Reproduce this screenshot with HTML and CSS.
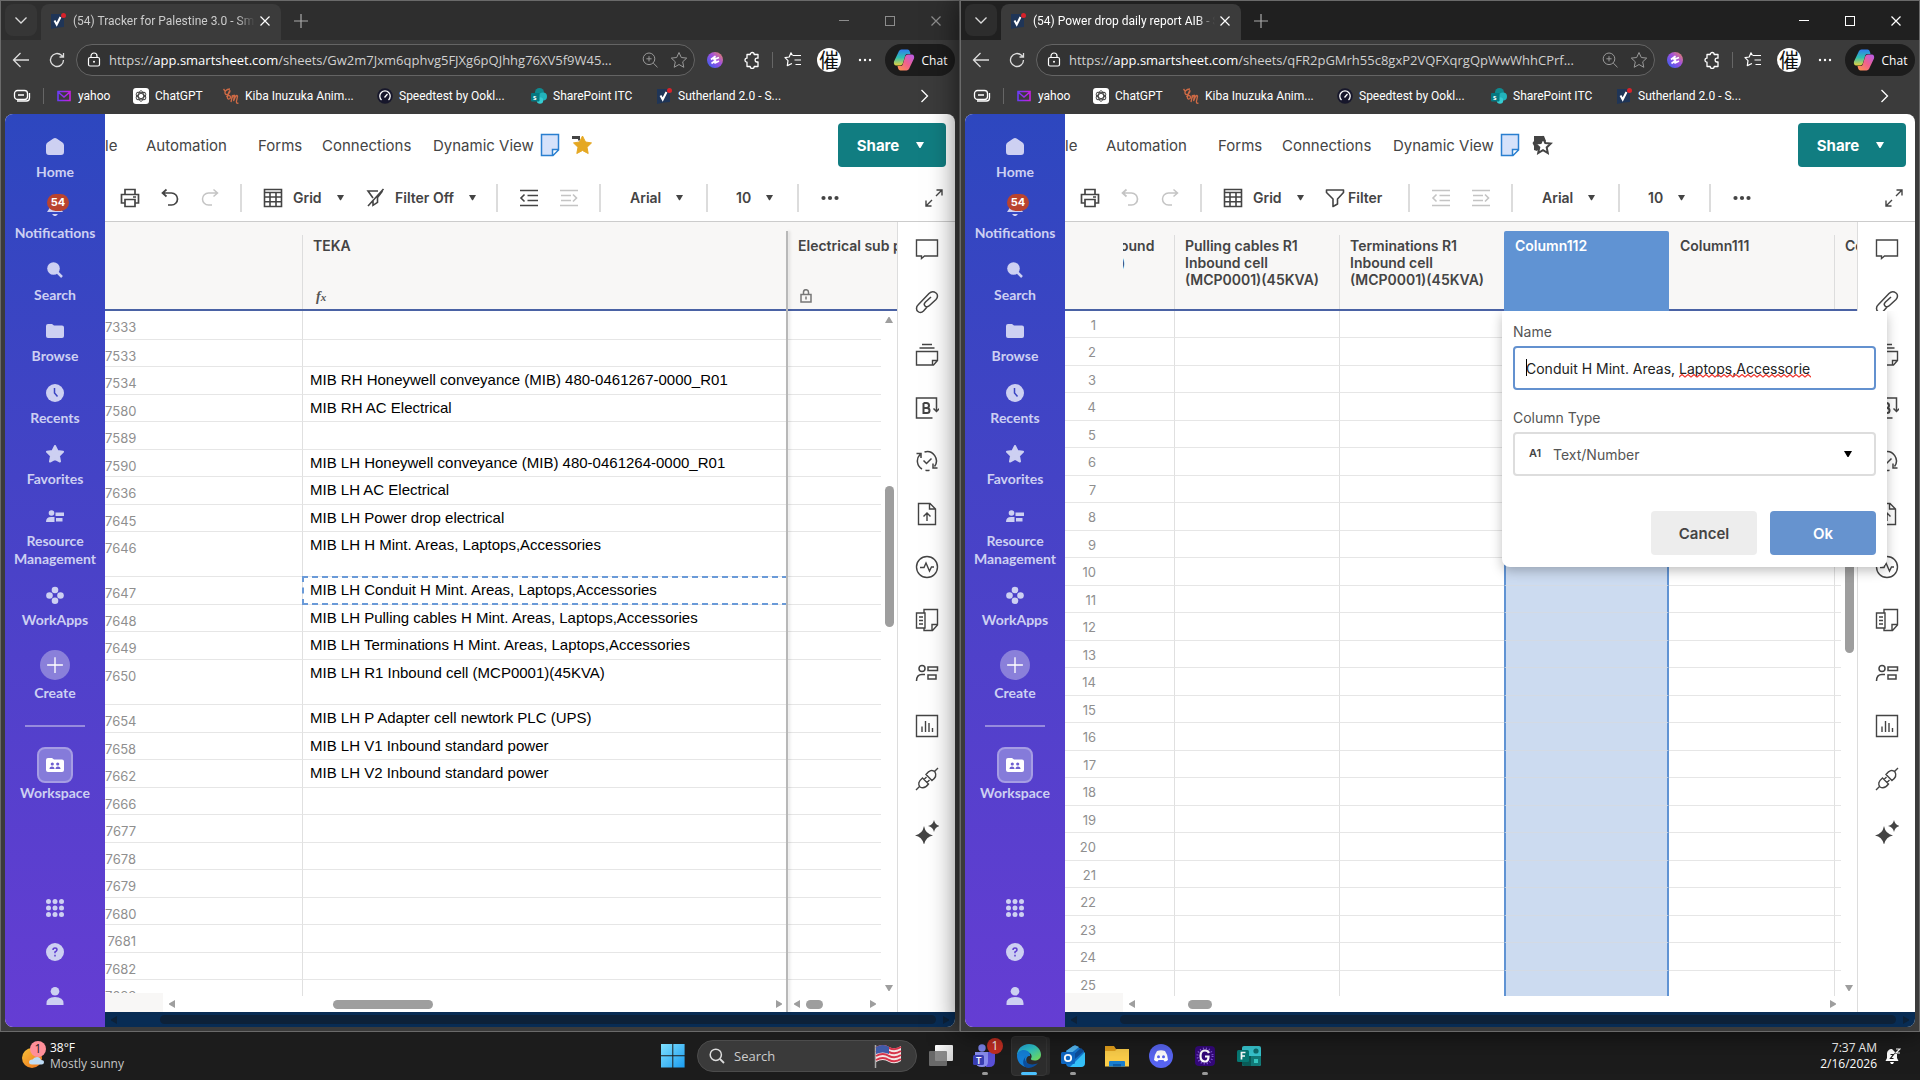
FILE: index.html
```html
<!DOCTYPE html>
<html lang="en">
<head>
<meta charset="utf-8">
<title>Desktop</title>
<link rel="stylesheet" href="styles.css">
</head>
<body>
<svg class="sprite" aria-hidden="true">
  <defs>
    <linearGradient id="g-cop1" x1="0" y1="0" x2="0" y2="1"><stop offset="0" stop-color="#2f7df0"/><stop offset=".5" stop-color="#2fc0b0"/><stop offset="1" stop-color="#e8d23c"/></linearGradient>
    <linearGradient id="g-cop2" x1="1" y1="0" x2="0" y2="1"><stop offset="0" stop-color="#b45cf0"/><stop offset=".5" stop-color="#f0608c"/><stop offset="1" stop-color="#ff9a4a"/></linearGradient>
    <linearGradient id="g-ext" x1="1" y1="0" x2="0" y2="1"><stop offset="0" stop-color="#f08a5a"/><stop offset=".45" stop-color="#a050e0"/><stop offset="1" stop-color="#2a60f0"/></linearGradient>
    <linearGradient id="g-edge" x1="0" y1="0" x2="1" y2="1"><stop offset="0" stop-color="#1f9fe0"/><stop offset=".45" stop-color="#2fc6c8"/><stop offset="1" stop-color="#7be04a"/></linearGradient>
    <linearGradient id="g-win" x1="0" y1="0" x2="1" y2="1"><stop offset="0" stop-color="#7fe0ff"/><stop offset="1" stop-color="#1a9cf0"/></linearGradient>
    <linearGradient id="g-yah" x1="0" y1="0" x2="1" y2="0"><stop offset="0" stop-color="#6a3cf5"/><stop offset="1" stop-color="#c81ee0"/></linearGradient>
    <linearGradient id="g-sun" x1="0" y1="0" x2="1" y2="1"><stop offset="0" stop-color="#f8c33a"/><stop offset="1" stop-color="#ee6f1a"/></linearGradient>
    <linearGradient id="g-task" x1="0" y1="0" x2="1" y2="1"><stop offset="0" stop-color="#fff"/><stop offset="1" stop-color="#d0d0d0"/></linearGradient>
  </defs>
  <!-- browser chrome -->
  <symbol id="chev-down" viewBox="0 0 14 14"><path d="M1.500 4.500 7 10l5.500-5.500" fill="none" stroke="currentColor" stroke-width="1.300"/></symbol>
  <symbol id="sheet-logo" viewBox="0 0 16 16"><path d="M1 1h13v13l-6 .5L1 16z" fill="#1f3557"/><path d="m4.500 7.500 2.200 4L10.500 4" fill="none" stroke="#fff" stroke-width="2"/><circle cx="13.500" cy="2.500" r="2.500" fill="#d8222a"/></symbol>
  <symbol id="close" viewBox="0 0 12 12"><path d="m1.500 1.500 9 9m0-9-9 9" fill="none" stroke="currentColor" stroke-width="1.200"/></symbol>
  <symbol id="plus" viewBox="0 0 16 16"><path d="M8 1v14M1 8h14" fill="none" stroke="currentColor" stroke-width="1.200"/></symbol>
  <symbol id="win-min" viewBox="0 0 12 12"><path d="M1 5.500h10" stroke="currentColor"/></symbol>
  <symbol id="win-max" viewBox="0 0 12 12"><rect x="1.500" y="1.500" width="9" height="9" fill="none" stroke="currentColor"/></symbol>
  <symbol id="back" viewBox="0 0 18 18"><path d="M17 9H1.500M8.500 2l-7 7 7 7" fill="none" stroke="currentColor" stroke-width="1.300"/></symbol>
  <symbol id="reload" viewBox="0 0 18 18"><path d="M15.500 9a6.500 6.500 0 1 1-2-4.700l1.500 1.500M15.500 2v4h-4" fill="none" stroke="currentColor" stroke-width="1.300"/></symbol>
  <symbol id="lock" viewBox="0 0 16 16"><rect x="2.500" y="5.500" width="11" height="8.500" rx="1.500" fill="none" stroke="currentColor" stroke-width="1.200"/><path d="M5 5.500V4a3 3 0 0 1 6 0v1.500" fill="none" stroke="currentColor" stroke-width="1.200"/><circle cx="8" cy="9.700" r="1" fill="currentColor"/></symbol>
  <symbol id="zoomin" viewBox="0 0 16 16"><path d="M7 1a5.800 5.800 0 1 0 0 11.600A5.800 5.800 0 0 0 7 1zm4.200 10 4.300 4.300M7 4.200v5.200M4.400 6.800h5.200" fill="none" stroke="currentColor"/></symbol>
  <symbol id="star-o" viewBox="0 0 18 18"><path d="m9 1.500 2.300 5 5.400.6-4 3.700 1.100 5.500L9 13.500l-4.800 2.800 1.100-5.500-4-3.700 5.400-.6z" fill="none" stroke="currentColor" stroke-linejoin="round"/></symbol>
  <symbol id="ext" viewBox="0 0 16 16"><circle cx="8" cy="8" r="8" fill="url(#g-ext)"/><path d="M4 7.500 8 4.500 7 7.500l5-2M4.500 11.500l4-3-.5 2.500 4-2" stroke="#fff" stroke-width="1.700" fill="none" stroke-linejoin="round"/></symbol>
  <symbol id="puzzle" viewBox="0 0 18 18"><path d="M4 3.500h3.200a2 2 0 0 1 4 0H15v3.700h-1a1.900 1.900 0 0 0 0 3.800h1v4.500h-3.800a2 2 0 0 1-4 0H4v-4.300a2 2 0 0 1 0-4z" fill="none" stroke="currentColor" stroke-width="1.300" stroke-linejoin="round"/></symbol>
  <symbol id="favs" viewBox="0 0 18 18"><path d="M8.500 4.500 7 1.800 5.200 6 1 6.600l3 3-.7 5L8 12.500M9 4.500h8M10.500 9H17M11.500 13.500H17" fill="none" stroke="currentColor" stroke-width="1.200" stroke-linejoin="round"/></symbol>
  <symbol id="dots" viewBox="0 0 18 6"><circle cx="4" cy="3" r="1.200" fill="currentColor"/><circle cx="9" cy="3" r="1.200" fill="currentColor"/><circle cx="14" cy="3" r="1.200" fill="currentColor"/></symbol>
  <symbol id="copilot" viewBox="0 0 22 22"><path d="M6 2c1-1.300 2-1.500 3.500-1.500h5c1.500 0 2 1 2.500 2.500l.5 2h-3c-1.500 0-2 .8-2.500 2.200L10 14c-.5 1.500-1.500 2.500-3 2.500H3.500C1 16.500.5 14.500 1 12.500z" fill="url(#g-cop1)"/><path d="M16 20c-1 1.300-2 1.500-3.500 1.500h-5C6 21.500 5.500 20.500 5 19l-.5-2h3c1.500 0 2-.8 2.500-2.200L12 8c.5-1.500 1.500-2.500 3-2.500h3.500c2.500 0 3 2 2.500 4z" fill="url(#g-cop2)"/></symbol>
  <symbol id="workspaces" viewBox="0 0 18 14"><rect x="1.500" y="1.500" width="13" height="9" rx="3" fill="none" stroke="currentColor" stroke-width="1.300"/><path d="M16.500 4v5a3 3 0 0 1-3 3H4M5 6h6" fill="none" stroke="currentColor" stroke-width="1.300"/></symbol>
  <symbol id="yahoo" viewBox="0 0 16 16"><path d="M2 3.500h12v9H2zM2 4l6 5 6-5" fill="none" stroke="url(#g-yah)" stroke-width="1.600"/></symbol>
  <symbol id="gpt" viewBox="0 0 16 16"><rect width="16" height="16" rx="3" fill="#fff"/><g fill="none" stroke="#444" stroke-width=".9"><ellipse cx="8" cy="8" rx="2.600" ry="5.300"/><ellipse cx="8" cy="8" rx="2.600" ry="5.300" transform="rotate(60 8 8)"/><ellipse cx="8" cy="8" rx="2.600" ry="5.300" transform="rotate(120 8 8)"/></g></symbol>
  <symbol id="kiba" viewBox="0 0 16 16"><path d="M.5 1 2 3M7 1C3 1 1 4 2.500 6S7 5 7 3 4 8 4.500 10s3 1 3-1-3-2-4 0M8 14l1.500-7M9 10q2-4 2.500-2.500L10.500 13l2-4.500q1.500-2 2 0L13.500 13q-.5 3 2 2" fill="none" stroke="#cf6a45" stroke-width="1.300"/></symbol>
  <symbol id="speed" viewBox="0 0 16 16"><circle cx="8" cy="8" r="7.800" fill="#17172b"/><path d="M4.500 12a5.200 5.200 0 1 1 7 0M7.500 9.500 10.500 6" fill="none" stroke="#fff" stroke-width="1.300"/></symbol>
  <symbol id="sharept" viewBox="0 0 16 16"><circle cx="8.500" cy="4.500" r="4.500" fill="#0f8a90"/><circle cx="12" cy="8.500" r="4" fill="#22b4bc"/><circle cx="9" cy="12.500" r="3.200" fill="#35ccd2"/><rect y="5" width="8.500" height="8.500" rx="1" fill="#067880"/><text x="2" y="12" font-size="8" font-weight="700" font-family="Lato,sans-serif" fill="#fff">s</text></symbol>
  <symbol id="chev-right" viewBox="0 0 10 14"><path d="m1.500 1 6 6-6 6" fill="none" stroke="currentColor" stroke-width="1.300"/></symbol>
  <!-- sidebar -->
  <symbol id="home" viewBox="0 0 18 18"><path d="M9 0q1 0 2 .8l5.500 3.700Q18 5.500 18 7.500V14q0 3-3 3H3q-3 0-3-3V7.500q0-2 1.500-3L7 .8Q8 0 9 0z" fill="currentColor"/></symbol>
  <symbol id="bell" viewBox="0 0 18 18"><path d="M9 0c-4 0-6 3-6 6v4L1 13h16l-2-3V6c0-3-2-6-6-6zM6 15h6l-2 2H8z" fill="currentColor"/></symbol>
  <symbol id="search-f" viewBox="0 0 18 18"><circle cx="7.500" cy="7.500" r="6.300" fill="currentColor"/><path d="m11 11 5 5" stroke="currentColor" stroke-width="2.500"/></symbol>
  <symbol id="folder" viewBox="0 0 18 18"><path d="M0 4q0-2 2-2h4l2 1.500h8q2 0 2 2V14q0 2-2 2H2q-2 0-2-2z" fill="currentColor"/></symbol>
  <symbol id="clock" viewBox="0 0 18 18"><circle cx="9" cy="9" r="9" fill="currentColor"/><path d="M8.500 4v5l3 3.500" stroke="#3a44c3" stroke-width="1.500" fill="none"/></symbol>
  <symbol id="star-f" viewBox="0 0 18 18"><path d="m9 1 2.500 5 5.500.8-4 4 1 5.700-5-2.700-5 2.700 1-5.700-4-4L6.500 6z" fill="currentColor" stroke="currentColor" stroke-width="2" stroke-linejoin="round"/></symbol>
  <symbol id="resource" viewBox="0 0 18 18"><circle cx="5.500" cy="6" r="2.800" fill="currentColor"/><path d="M0 15q0-5 5-5h3.500v5zM9.500 5.500H18V9H9.500zM10 11h6.500v3.500H10z" fill="currentColor"/></symbol>
  <symbol id="workapps" viewBox="0 0 18 18"><circle cx="9" cy="4" r="3.300" fill="currentColor"/><circle cx="3.500" cy="9.500" r="3.300" fill="currentColor"/><circle cx="14.500" cy="9.500" r="3.300" fill="currentColor"/><circle cx="9" cy="14.700" r="3.300" fill="currentColor"/></symbol>
  <symbol id="team-folder" viewBox="0 0 18 18"><path d="M0 4q0-2 2-2h4l2 1.500h8q2 0 2 2V14q0 2-2 2H2q-2 0-2-2z" fill="#fff"/><g fill="#6d5fd0"><circle cx="6.300" cy="8" r="1.600"/><circle cx="11.700" cy="8" r="1.600"/><path d="M3.500 13q0-2.500 2.500-2.500T8.500 13zM9.500 13q0-2.500 2.500-2.500t2.500 2.500z"/></g></symbol>
  <symbol id="apps" viewBox="0 0 18 18"><g fill="currentColor"><circle cx="2.500" cy="2.500" r="2.500"/><circle cx="9" cy="2.500" r="2.500"/><circle cx="15.500" cy="2.500" r="2.500"/><circle cx="2.500" cy="9" r="2.500"/><circle cx="9" cy="9" r="2.500"/><circle cx="15.500" cy="9" r="2.500"/><circle cx="2.500" cy="15.500" r="2.500"/><circle cx="9" cy="15.500" r="2.500"/><circle cx="15.500" cy="15.500" r="2.500"/></g></symbol>
  <symbol id="help" viewBox="0 0 18 18"><circle cx="9" cy="9" r="9" fill="currentColor"/><path d="M7 7q0-2 2-2t2 1.700Q11 8 9 9v1.300M9 11.800v1.600" stroke="#5e3dd0" stroke-width="1.500" fill="none"/></symbol>
  <symbol id="person" viewBox="0 0 18 18"><circle cx="9" cy="4.300" r="4.300" fill="currentColor"/><path d="M.5 18v-1.500Q.5 10 9 10t8.500 6.500V18z" fill="currentColor"/></symbol>
  <!-- sheet menu and toolbar -->
  <symbol id="note" viewBox="0 0 20 24"><path d="M1.500 1.500h17V17L13 22.500H1.500zM18.500 16.500h-6v6" fill="#d6e2fa" stroke="#2a7fd0" stroke-width="1.500"/></symbol>
  <symbol id="fav-on" viewBox="0 0 22 22"><path d="M1 2h8v4.500H7V5H1z" fill="#444"/><path d="m11.500 2 3 6 6 .9-4.500 4.400 1.200 6.200-5.700-3-5.700 3L7 13.300 2.500 8.900l6-.9z" fill="#e5a823" stroke="#e5a823" stroke-width="1"/></symbol>
  <symbol id="fav-off" viewBox="0 0 22 22"><path d="M3 2h10l2 5-9 10-3-1V12L1.500 9 3 7z" fill="#444"/><path d="m12 4 2.300 5 5.400.6-4 3.800 1.100 5.600-4.800-2.800L7.200 19l1.100-5.600-4-3.800 5.400-.6z" fill="#fff" stroke="#444" stroke-width="2"/></symbol>
  <symbol id="caret" viewBox="0 0 8 8"><path d="M0 1h8L4.500 7h-1z" fill="currentColor"/></symbol>
  <symbol id="print" viewBox="0 0 20 20"><path d="M5 6V1.500h10V6M5 15H1.500V6.500h17V15H15M5 11.500h10v7H5z" fill="none" stroke="currentColor" stroke-width="1.700"/><path d="M13 9h3" stroke="currentColor" stroke-width="1.500"/></symbol>
  <symbol id="undo" viewBox="0 0 20 20"><path d="M6.500 1.500 2.500 5l4 3.500M3 5h8.500a6 6 0 0 1 0 12H8" fill="none" stroke="currentColor" stroke-width="1.700"/></symbol>
  <symbol id="redo" viewBox="0 0 20 20"><path d="m13.500 1.500 4 3.500-4 3.500M17 5H8.500a6 6 0 0 0 0 12H12" fill="none" stroke="currentColor" stroke-width="1.500"/></symbol>
  <symbol id="gridv" viewBox="0 0 20 20"><path d="M1.500 1.500h17v17h-17zM1.500 4.500h17M1.500 9h17M1.500 13.800h17M7 4.500v14M13 4.500v14" fill="none" stroke="currentColor" stroke-width="1.600"/></symbol>
  <symbol id="filter-x" viewBox="0 0 20 20"><path d="M13 3H3l5 7M8 12.500v4.800l4.500-3V9.500L17.500 3M18.500 1 3 18" fill="none" stroke="currentColor" stroke-width="1.600"/></symbol>
  <symbol id="filter" viewBox="0 0 20 20"><path d="M1.500 2h17v2.500L12.500 11v5L8 18.500V11L1.500 4.500z" fill="none" stroke="currentColor" stroke-width="1.600" stroke-linejoin="round"/></symbol>
  <symbol id="outdent" viewBox="0 0 20 20"><path d="M1 2.500h18M1 17.500h18M8.500 7.500H19M8.500 12.500H19M5.500 6.500 2 10l3.500 3.500" fill="none" stroke="currentColor" stroke-width="1.600"/></symbol>
  <symbol id="indent" viewBox="0 0 20 20"><path d="M1 2.500h18M1 17.500h18M2 7.500h10M2 12.500h10M14 6.500l3.500 3.500-3.500 3.500" fill="none" stroke="currentColor" stroke-width="1.600"/></symbol>
  <symbol id="more" viewBox="0 0 20 6"><circle cx="3.500" cy="3" r="2.100" fill="currentColor"/><circle cx="10" cy="3" r="2.100" fill="currentColor"/><circle cx="16.500" cy="3" r="2.100" fill="currentColor"/></symbol>
  <symbol id="expand" viewBox="0 0 18 18"><path d="M11.500 1H17v5.500M17 1l-6 6M1 11.500V17h5.500M1 17l6-6" fill="none" stroke="currentColor" stroke-width="1.400"/></symbol>
  <symbol id="padlock" viewBox="0 0 12 14"><path d="M1 5.500h10V13H1zM3.500 5.500V3.200a2.500 2.500 0 0 1 5 0v2.300M6 7.500v3" fill="none" stroke="#777" stroke-width="1.500"/></symbol>
  <!-- right rail -->
  <symbol id="r-comment" viewBox="0 0 24 24"><path d="M1.500 3h21v16H9.500l-3 2.500V19h-5z" fill="none" stroke="currentColor" stroke-width="1.400"/></symbol>
  <symbol id="r-link" viewBox="0 0 24 24"><path d="M12.500 16.500 8.500 21c-2 2-4.500 1.500-5.500.5-2-1.500-2-4.500 0-6.500L14 3.500c2-2 5-2 7-.5s2 4.500 0 6.500l-6.500 6c-1.500 1.500-3.500 1.500-4.500.5s-1-2.500.5-4L16 7" fill="none" stroke="currentColor" stroke-width="1.500"/></symbol>
  <symbol id="r-cards" viewBox="0 0 24 24"><path d="M7 1.500h10M4.500 5h15M1.500 8.500h21v9l-4 4.500h-17zM17.500 22v-4.500h5" fill="none" stroke="currentColor" stroke-width="1.400"/></symbol>
  <symbol id="r-brand" viewBox="0 0 24 24"><path d="M17.500 22h-16V2h20v12.500M18.500 12.500l3 3 3-3" fill="none" stroke="currentColor" stroke-width="1.500"/><path d="M8.500 7v10h3.500a2.500 2.500 0 0 0 0-5h-3.500M8.500 7H11.500a2.400 2.400 0 0 1 0 5" fill="none" stroke="currentColor" stroke-width="2"/></symbol>
  <symbol id="r-update" viewBox="0 0 24 24"><path d="M7 20A9.300 9.300 0 0 1 5 5.500M9.500 3A9.300 9.300 0 0 1 19.500 17.500M14.500 21.300a9 9 0 0 1-4 0M1.500 4.500H6V9M22.500 19H18v-4.500M8.500 11.500l3 3 5-5" fill="none" stroke="currentColor" stroke-width="1.500"/></symbol>
  <symbol id="r-file" viewBox="0 0 24 24"><path d="M3.500 1.500H15L20.500 7v15.500h-17zM14.500 1.500V7h6M12 19v-7M8.500 14.500 12 11l3.500 3.500" fill="none" stroke="currentColor" stroke-width="1.400"/></symbol>
  <symbol id="r-activity" viewBox="0 0 24 24"><circle cx="12" cy="12" r="10.500" fill="none" stroke="currentColor" stroke-width="1.400"/><path d="M5 12.500h4l2-4.500 3.500 8 2-4H19" fill="none" stroke="currentColor" stroke-width="1.400"/></symbol>
  <symbol id="r-summary" viewBox="0 0 24 24"><path d="M9 5V1.500h13.500V17l-5 5.500H9V20M22 16.500h-5v6M1.500 5H10v15H1.500zM4 9h4M4 12.500h4M4 16h4" fill="none" stroke="currentColor" stroke-width="1.400"/></symbol>
  <symbol id="r-people" viewBox="0 0 24 24"><circle cx="7" cy="7.500" r="3" fill="none" stroke="currentColor" stroke-width="1.500"/><path d="M1.500 20q0-6.500 5.500-6.500h3M13 6h9.500v3.500H13zM13 14h8v4h-8z" fill="none" stroke="currentColor" stroke-width="1.500"/></symbol>
  <symbol id="r-chart" viewBox="0 0 24 24"><path d="M1.500 1.500h21v21h-21zM7 18v-5.500M10.500 18V7M14 18V9M17.500 18v-4" fill="none" stroke="currentColor" stroke-width="1.400"/></symbol>
  <symbol id="r-plug" viewBox="0 0 24 24"><path d="M1 23l3.500-3.500M7.500 11l6 6q-4 5.500-8.500 3-3.500-4 2.500-9zM23 1l-3.500 3.500M11 7.500l6 6q5.500-4 3-8.500-4-4-9 2.500zM9 12.500l2.500-2.500M12 15.500l2.500-2.500" fill="none" stroke="currentColor" stroke-width="1.400"/></symbol>
  <symbol id="r-ai" viewBox="0 0 24 24"><path d="M9 6q1.500 8 9 9.500Q10.500 17 9 25 7.500 17 0 15.500 7.500 14 9 6zM19 0q1 5 6 6-5 1-6 6-1-5-6-6 5-1 6-6z" fill="currentColor"/></symbol>
  <!-- taskbar -->
  <symbol id="weather" viewBox="0 0 26 28"><circle cx="11" cy="16" r="10" fill="url(#g-sun)"/><path d="M11 22.500q-3 0-3-2.500t3.500-2.500Q13 15 16 15t4 3q3 0 3 2.200t-2.500 2.300z" fill="#bfdcf5"/></symbol>
  <symbol id="start" viewBox="0 0 24 24"><path d="M0 0h11.300v11.300H0zM12.300 0h11.300v11.300H12.300zM0 12.300h11.300v11.300H0zM12.300 12.300h11.300v11.300H12.300z" fill="url(#g-win)"/></symbol>
  <symbol id="search-o" viewBox="0 0 16 16"><circle cx="6.800" cy="6.800" r="5.600" fill="none" stroke="currentColor" stroke-width="1.500"/><path d="m11 11 4 4" stroke="currentColor" stroke-width="1.800"/></symbol>
  <symbol id="flag" viewBox="0 0 28 24"><path d="M1.500 1v23" stroke="#aaa" stroke-width="1.500"/><path d="M2 3q7-4 13 0 6 3 12-1v15q-6 4-12 1-6-4-13 0z" fill="#f3e6e6"/><path d="M2 4q7-4 13 0 6 3 12-1M2 8q7-4 13 0 6 3 12-1M2 12q7-4 13 0 6 3 12-1M2 16q7-4 13 0 6 3 12-1" fill="none" stroke="#d6344a" stroke-width="2"/><path d="M2 3q7-4 13 0v7Q9 7 2 10z" fill="#3f5aa8"/></symbol>
  <symbol id="taskview" viewBox="0 0 24 24"><rect x="6" y="1" width="18" height="16" rx="1" fill="url(#g-task)"/><rect y="7" width="18" height="15" rx="1" fill="#777" opacity=".85"/></symbol>
  <symbol id="teams" viewBox="0 0 24 24"><circle cx="9" cy="4" r="3.700" fill="#7b83eb"/><path d="M13 8h9v9q0 6-6 6h-3z" fill="#5a50d8"/><path d="M2 8h13v10q0 5-6 5t-7-5z" fill="#8a8ff0"/><rect y="11" width="11" height="10" rx="1.500" fill="#3a3fb5"/><text x="3" y="19.500" font-size="9" font-weight="700" font-family="Lato,sans-serif" fill="#fff">T</text></symbol>
  <symbol id="edge" viewBox="0 0 24 24"><path d="M0 11.500C0 5 5.500 0 12 0s12 5 12 10.500c0 4-3 6-6.500 6-2.500 0-4-1-3.500-2 1.500-2 .5-5-2.500-6C8 7 1.500 7.500 0 11.500z" fill="url(#g-edge)"/><path d="M0 12c0-5 6-7.500 10.500-5 2 1 3 3 2.500 5-4-1-6 6 0 11-7.500 1.500-13-5-13-11z" fill="#1480d8"/><path d="M8 14c-.5 5 6 8.500 13 5-2.500 3.500-7 5.500-11 4.800C4 22 6 14 9.500 12q-1.300 1-1.500 2z" fill="#0c4f9e"/></symbol>
  <symbol id="outlook" viewBox="0 0 24 24"><path d="M5 7 14 1l9 6v12q0 4-4 4H9q-4 0-4-4z" fill="#1376d0"/><path d="m5 7 7-5q2-1 4 0l2 1-9 7z" fill="#55b8f0"/><path d="m11 12 9-8 3 3-9 8z" fill="#0d4f9c"/><path d="M24 8v11q0 4-4 4H9z" fill="#35c2fa"/><rect y="8" width="14" height="12" rx="1.500" fill="#0f68c4"/><circle cx="7" cy="14" r="3.200" fill="none" stroke="#fff" stroke-width="1.800"/></symbol>
  <symbol id="explorer" viewBox="0 0 24 24"><path d="M0 2h9l2 3h13v17H0z" fill="#e6a21c"/><path d="M0 7h10l2-2h12v17.500H0z" fill="#fdcf4a"/><path d="M4 22.500V18q0-1 1-1h14q1 0 1 1v4.500z" fill="#1a7fd0"/><path d="M8 20h8v2.500H8z" fill="#0f5ea8"/></symbol>
  <symbol id="discord" viewBox="0 0 24 24"><circle cx="12" cy="12" r="12" fill="#5865f2"/><path d="M8 7q4-1.500 8 0 3 4 3 9-2 1.500-3.500 1.500l-1-1.500h-5l-1 1.500Q7 17.500 5 16q0-5 3-9z" fill="#fff"/><circle cx="9.500" cy="12.800" r="1.500" fill="#5865f2"/><circle cx="14.500" cy="12.800" r="1.500" fill="#5865f2"/></symbol>
  <symbol id="gapp" viewBox="0 0 24 24"><rect x="2" y="2" width="20" height="20" rx="4" fill="#34087a"/><circle cx="12" cy="12" r="7.500" fill="none" stroke="#8a5fe0" stroke-width="2" stroke-dasharray="1 2"/><path d="M16 9q-1-2.500-4-2.500-4.500 0-4.500 5.500t4.500 5.500q3.500 0 3.500-5H12" fill="none" stroke="#fff" stroke-width="2.200"/></symbol>
  <symbol id="forms" viewBox="0 0 24 24"><rect x="5" y="2" width="19" height="20" rx="2" fill="#37c6d0"/><path d="M14 12h10v8q0 2-2 2h-8z" fill="#127a78"/><path d="M5 12h9v10H7q-2 0-2-2z" fill="#0a5c58"/><circle cx="19" cy="7" r="2.600" fill="#0f6f70"/><rect x="17" y="15" width="4" height="4" fill="#35c8c0"/><rect y="6" width="12" height="12" rx="1.500" fill="#077a75"/><path d="M4.500 15.500v-7h4M4.500 12H8" fill="none" stroke="#fff" stroke-width="1.700"/></symbol>
  <symbol id="dnd" viewBox="0 0 16 16"><path d="M7 1c-3 0-5 2-5 5v4l-1.500 3h13L12 10V6M5 14h4l-1 2H6z" fill="#fff"/><path d="M5.500 6.500h3l-3 4h3M10 1h3.500L10 5.500h3.500" fill="none" stroke="#1c1c1c" stroke-width="1.200"/><path d="M11 1h4l-4 4h4" fill="none" stroke="#fff" stroke-width="1.200"/></symbol>
</svg>

<div class="desktop">
<div class="windows">

<!-- Window 1 -->
<section class="window inactive">
  <div class="tabstrip">
    <button class="tablist" aria-label="Tabs"><svg><use href="#chev-down"/></svg></button>
    <div class="tab"><svg class="i16"><use href="#sheet-logo"/></svg><span class="tab-title">(54) Tracker for Palestine 3.0 - Sma</span><button class="tab-x" aria-label="Close tab"><svg><use href="#close"/></svg></button></div>
    <button class="newtab" aria-label="New tab"><svg class="i16"><use href="#plus"/></svg></button>
    <div class="wincontrols"><button aria-label="Minimize"><svg><use href="#win-min"/></svg></button><button aria-label="Maximize"><svg><use href="#win-max"/></svg></button><button aria-label="Close"><svg><use href="#close"/></svg></button></div>
  </div>
  <div class="navbar">
    <button class="nb" aria-label="Back"><svg class="i18"><use href="#back"/></svg></button>
    <button class="nb" aria-label="Reload"><svg class="i18"><use href="#reload"/></svg></button>
    <div class="address"><svg class="i16"><use href="#lock"/></svg><span class="url">https://<b>app.smartsheet.com</b>/sheets/Gw2m7Jxm6qphvg5FJXg6pQJhhg76XV5f9W45...</span><svg class="i16 dim"><use href="#zoomin"/></svg><svg class="i18 dim"><use href="#star-o"/></svg></div>
    <div class="navtools"><svg class="i16"><use href="#ext"/></svg><svg class="i18"><use href="#puzzle"/></svg><i class="vbar"></i><svg class="i18"><use href="#favs"/></svg><span class="avatar">催</span><svg class="dots"><use href="#dots"/></svg></div>
    <button class="chat"><svg><use href="#copilot"/></svg>Chat</button>
  </div>
  <nav class="bookmarks">
    <svg class="ws"><use href="#workspaces"/></svg><i class="vbar"></i>
    <a href="#" class="b1"><svg class="i16"><use href="#yahoo"/></svg>yahoo</a>
    <a href="#" class="b2"><svg class="i16"><use href="#gpt"/></svg>ChatGPT</a>
    <a href="#" class="b3"><svg class="i16"><use href="#kiba"/></svg>Kiba Inuzuka Anim...</a>
    <a href="#" class="b3"><svg class="i16"><use href="#speed"/></svg>Speedtest by Ookl...</a>
    <a href="#" class="b4"><svg class="i16"><use href="#sharept"/></svg>SharePoint ITC</a>
    <a href="#" class="b3"><svg class="i16"><use href="#sheet-logo"/></svg>Sutherland 2.0 - S...</a>
    <svg class="more-bm"><use href="#chev-right"/></svg>
  </nav>
  <div class="page">
    <nav class="side">
      <a href="#"><svg><use href="#home"/></svg>Home</a>
      <a href="#"><svg><use href="#bell"/></svg><em class="badge">54</em>Notifications</a>
      <a href="#"><svg><use href="#search-f"/></svg>Search</a>
      <a href="#"><svg><use href="#folder"/></svg>Browse</a>
      <a href="#"><svg><use href="#clock"/></svg>Recents</a>
      <a href="#"><svg><use href="#star-f"/></svg>Favorites</a>
      <a href="#"><svg><use href="#resource"/></svg>Resource Management</a>
      <a href="#"><svg><use href="#workapps"/></svg>WorkApps</a>
      <a href="#" class="create"><span class="round"><svg class="i16"><use href="#plus"/></svg></span>Create</a>
      <hr>
      <a href="#" class="space"><span class="box"><svg><use href="#team-folder"/></svg></span>Workspace</a>
      <div class="side-foot"><svg><use href="#apps"/></svg><svg><use href="#help"/></svg><svg><use href="#person"/></svg></div>
    </nav>
    <main class="app">
      <div class="menu"><a href="#" class="m0">le</a><a href="#" class="m1">Automation</a><a href="#" class="m2">Forms</a><a href="#" class="m3">Connections</a><a href="#">Dynamic View</a><svg class="note"><use href="#note"/></svg><svg class="fav"><use href="#fav-on"/></svg><button class="share">Share<svg><use href="#caret"/></svg></button></div>
      <div class="tools">
        <button class="t" aria-label="Print"><svg><use href="#print"/></svg></button><button class="t" aria-label="Undo"><svg><use href="#undo"/></svg></button><button class="t off" aria-label="Redo"><svg><use href="#redo"/></svg></button>
        <i class="sep"></i>
        <button class="view"><svg><use href="#gridv"/></svg>Grid<svg class="caret"><use href="#caret"/></svg></button>
        <button class="filt"><svg><use href="#filter-x"/></svg>Filter Off<svg class="caret"><use href="#caret"/></svg></button>
        <i class="sep"></i>
        <button class="t" aria-label="Outdent"><svg><use href="#outdent"/></svg></button><button class="t off" aria-label="Indent"><svg><use href="#indent"/></svg></button>
        <i class="sep"></i>
        <button class="font">Arial<svg class="caret"><use href="#caret"/></svg></button>
        <i class="sep"></i>
        <button class="size">10<svg class="caret"><use href="#caret"/></svg></button>
        <i class="sep"></i>
        <button class="t" aria-label="More"><svg class="more"><use href="#more"/></svg></button>
        <button class="expand" aria-label="Expand"><svg><use href="#expand"/></svg></button>
      </div>
      <div class="work">
        <div class="sheet">
          <div class="rows">
            <table class="tracker">
              <colgroup><col class="c-num"><col class="c-gap"><col><col class="c-sub"></colgroup>
              <thead><tr><th><div></div></th><th><div></div></th><th><div class="ln">TEKA<span class="fx">f<small>x</small></span></div></th><th><div class="sub">Electrical sub panel<svg class="pad"><use href="#padlock"/></svg></div></th></tr></thead>
              <tbody>
                <tr class="top"><td>7333</td><td></td><td></td><td></td></tr>
                <tr class="s"><td>7533</td><td></td><td></td><td></td></tr>
                <tr><td>7534</td><td></td><td>MIB RH Honeywell conveyance (MIB) 480-0461267-0000_R01</td><td></td></tr>
                <tr class="s"><td>7580</td><td></td><td>MIB RH AC Electrical</td><td></td></tr>
                <tr><td>7589</td><td></td><td></td><td></td></tr>
                <tr class="s"><td>7590</td><td></td><td>MIB LH Honeywell conveyance (MIB) 480-0461264-0000_R01</td><td></td></tr>
                <tr><td>7636</td><td></td><td>MIB LH AC Electrical</td><td></td></tr>
                <tr class="s"><td>7645</td><td></td><td>MIB LH Power drop electrical</td><td></td></tr>
                <tr class="tall"><td>7646</td><td></td><td>MIB LH H Mint. Areas, Laptops,Accessories</td><td></td></tr>
                <tr><td>7647</td><td></td><td class="copied">MIB LH Conduit H Mint. Areas, Laptops,Accessories</td><td></td></tr>
                <tr class="s"><td>7648</td><td></td><td>MIB LH Pulling cables H Mint. Areas, Laptops,Accessories</td><td></td></tr>
                <tr><td>7649</td><td></td><td>MIB LH Terminations H Mint. Areas, Laptops,Accessories</td><td></td></tr>
                <tr class="tall"><td>7650</td><td></td><td>MIB LH R1 Inbound cell (MCP0001)(45KVA)</td><td></td></tr>
                <tr><td>7654</td><td></td><td>MIB LH P Adapter cell newtork PLC (UPS)</td><td></td></tr>
                <tr class="s"><td>7658</td><td></td><td>MIB LH V1 Inbound standard power</td><td></td></tr>
                <tr><td>7662</td><td></td><td>MIB LH V2 Inbound standard power</td><td></td></tr>
                <tr class="s"><td>7666</td><td></td><td></td><td></td></tr>
                <tr><td>7677</td><td></td><td></td><td></td></tr>
                <tr class="s"><td>7678</td><td></td><td></td><td></td></tr>
                <tr><td>7679</td><td></td><td></td><td></td></tr>
                <tr class="s"><td>7680</td><td></td><td></td><td></td></tr>
                <tr><td>7681</td><td></td><td></td><td></td></tr>
                <tr class="s"><td>7682</td><td></td><td></td><td></td></tr>
                <tr><td>7683</td><td></td><td></td><td></td></tr>
              </tbody>
            </table>
          </div>
          <div class="hscroll"><span class="corner"></span><div class="track"><svg class="al"><use href="#caret"/></svg><i class="thumb th-a"></i><svg class="ar"><use href="#caret"/></svg></div><div class="track sub-track"><svg class="al"><use href="#caret"/></svg><i class="thumb th-b"></i><svg class="ar"><use href="#caret"/></svg></div></div>
          <div class="vscroll"><svg class="au"><use href="#caret"/></svg><i class="thumb v1"></i><svg class="ad"><use href="#caret"/></svg></div>
          <i class="freeze"></i>
        </div>
        <aside class="rail"><svg><use href="#r-comment"/></svg><svg><use href="#r-link"/></svg><svg><use href="#r-cards"/></svg><svg><use href="#r-brand"/></svg><svg><use href="#r-update"/></svg><svg><use href="#r-file"/></svg><svg><use href="#r-activity"/></svg><svg><use href="#r-summary"/></svg><svg><use href="#r-people"/></svg><svg><use href="#r-chart"/></svg><svg><use href="#r-plug"/></svg><svg><use href="#r-ai"/></svg></aside>
      </div>
      <div class="outer-scroll"><svg class="al"><use href="#caret"/></svg><i></i><svg class="ar"><use href="#caret"/></svg></div>
    </main>
  </div>
</section>

<!-- Window 2 -->
<section class="window active">
  <div class="tabstrip">
    <button class="tablist" aria-label="Tabs"><svg><use href="#chev-down"/></svg></button>
    <div class="tab"><svg class="i16"><use href="#sheet-logo"/></svg><span class="tab-title">(54) Power drop daily report AIB - S</span><button class="tab-x" aria-label="Close tab"><svg><use href="#close"/></svg></button></div>
    <button class="newtab" aria-label="New tab"><svg class="i16"><use href="#plus"/></svg></button>
    <div class="wincontrols"><button aria-label="Minimize"><svg><use href="#win-min"/></svg></button><button aria-label="Maximize"><svg><use href="#win-max"/></svg></button><button aria-label="Close"><svg><use href="#close"/></svg></button></div>
  </div>
  <div class="navbar">
    <button class="nb" aria-label="Back"><svg class="i18"><use href="#back"/></svg></button>
    <button class="nb" aria-label="Reload"><svg class="i18"><use href="#reload"/></svg></button>
    <div class="address"><svg class="i16"><use href="#lock"/></svg><span class="url">https://<b>app.smartsheet.com</b>/sheets/qFR2pGMrh55c8gxP2VQFXqrgQpWwWhhCPrf...</span><svg class="i16 dim"><use href="#zoomin"/></svg><svg class="i18 dim"><use href="#star-o"/></svg></div>
    <div class="navtools"><svg class="i16"><use href="#ext"/></svg><svg class="i18"><use href="#puzzle"/></svg><i class="vbar"></i><svg class="i18"><use href="#favs"/></svg><span class="avatar">催</span><svg class="dots"><use href="#dots"/></svg></div>
    <button class="chat"><svg><use href="#copilot"/></svg>Chat</button>
  </div>
  <nav class="bookmarks">
    <svg class="ws"><use href="#workspaces"/></svg><i class="vbar"></i>
    <a href="#" class="b1"><svg class="i16"><use href="#yahoo"/></svg>yahoo</a>
    <a href="#" class="b2"><svg class="i16"><use href="#gpt"/></svg>ChatGPT</a>
    <a href="#" class="b3"><svg class="i16"><use href="#kiba"/></svg>Kiba Inuzuka Anim...</a>
    <a href="#" class="b3"><svg class="i16"><use href="#speed"/></svg>Speedtest by Ookl...</a>
    <a href="#" class="b4"><svg class="i16"><use href="#sharept"/></svg>SharePoint ITC</a>
    <a href="#" class="b3"><svg class="i16"><use href="#sheet-logo"/></svg>Sutherland 2.0 - S...</a>
    <svg class="more-bm"><use href="#chev-right"/></svg>
  </nav>
  <div class="page">
    <nav class="side">
      <a href="#"><svg><use href="#home"/></svg>Home</a>
      <a href="#"><svg><use href="#bell"/></svg><em class="badge">54</em>Notifications</a>
      <a href="#"><svg><use href="#search-f"/></svg>Search</a>
      <a href="#"><svg><use href="#folder"/></svg>Browse</a>
      <a href="#"><svg><use href="#clock"/></svg>Recents</a>
      <a href="#"><svg><use href="#star-f"/></svg>Favorites</a>
      <a href="#"><svg><use href="#resource"/></svg>Resource Management</a>
      <a href="#"><svg><use href="#workapps"/></svg>WorkApps</a>
      <a href="#" class="create"><span class="round"><svg class="i16"><use href="#plus"/></svg></span>Create</a>
      <hr>
      <a href="#" class="space"><span class="box"><svg><use href="#team-folder"/></svg></span>Workspace</a>
      <div class="side-foot"><svg><use href="#apps"/></svg><svg><use href="#help"/></svg><svg><use href="#person"/></svg></div>
    </nav>
    <main class="app">
      <div class="menu"><a href="#" class="m0">le</a><a href="#" class="m1">Automation</a><a href="#" class="m2">Forms</a><a href="#" class="m3">Connections</a><a href="#">Dynamic View</a><svg class="note"><use href="#note"/></svg><svg class="fav"><use href="#fav-off"/></svg><button class="share">Share<svg><use href="#caret"/></svg></button></div>
      <div class="tools">
        <button class="t" aria-label="Print"><svg><use href="#print"/></svg></button><button class="t off" aria-label="Undo"><svg><use href="#undo"/></svg></button><button class="t off" aria-label="Redo"><svg><use href="#redo"/></svg></button>
        <i class="sep"></i>
        <button class="view"><svg><use href="#gridv"/></svg>Grid<svg class="caret"><use href="#caret"/></svg></button>
        <button class="filt plain"><svg><use href="#filter"/></svg>Filter</button>
        <i class="sep"></i>
        <button class="t off" aria-label="Outdent"><svg><use href="#outdent"/></svg></button><button class="t off" aria-label="Indent"><svg><use href="#indent"/></svg></button>
        <i class="sep"></i>
        <button class="font">Arial<svg class="caret"><use href="#caret"/></svg></button>
        <i class="sep"></i>
        <button class="size">10<svg class="caret"><use href="#caret"/></svg></button>
        <i class="sep"></i>
        <button class="t" aria-label="More"><svg class="more"><use href="#more"/></svg></button>
        <button class="expand" aria-label="Expand"><svg><use href="#expand"/></svg></button>
      </div>
      <div class="work">
        <div class="sheet">
          <div class="rows">
            <table class="report">
              <colgroup><col class="c-num"><col class="c-cut"><col class="c-col"><col class="c-col"><col class="c-col"><col class="c-col"><col></colgroup>
              <thead><tr><th><div></div></th><th><div class="cut">ound<br>)</div></th><th><div class="ln">Pulling cables R1 Inbound cell (MCP0001)(45KVA)</div></th><th><div class="ln">Terminations R1 Inbound cell (MCP0001)(45KVA)</div></th><th class="picked"><div>Column112</div></th><th><div>Column111</div></th><th><div class="ln">Column110</div></th></tr></thead>
              <tbody>
                <tr class="first"><td>1</td><td></td><td></td><td></td><td class="sel"></td><td></td><td></td></tr>
                <tr><td>2</td><td></td><td></td><td></td><td class="sel"></td><td></td><td></td></tr>
                <tr class="s"><td>3</td><td></td><td></td><td></td><td class="sel"></td><td></td><td></td></tr>
                <tr><td>4</td><td></td><td></td><td></td><td class="sel"></td><td></td><td></td></tr>
                <tr class="s"><td>5</td><td></td><td></td><td></td><td class="sel"></td><td></td><td></td></tr>
                <tr><td>6</td><td></td><td></td><td></td><td class="sel"></td><td></td><td></td></tr>
                <tr class="s"><td>7</td><td></td><td></td><td></td><td class="sel"></td><td></td><td></td></tr>
                <tr><td>8</td><td></td><td></td><td></td><td class="sel"></td><td></td><td></td></tr>
                <tr class="s"><td>9</td><td></td><td></td><td></td><td class="sel"></td><td></td><td></td></tr>
                <tr><td>10</td><td></td><td></td><td></td><td class="sel"></td><td></td><td></td></tr>
                <tr class="s"><td>11</td><td></td><td></td><td></td><td class="sel"></td><td></td><td></td></tr>
                <tr><td>12</td><td></td><td></td><td></td><td class="sel"></td><td></td><td></td></tr>
                <tr class="s"><td>13</td><td></td><td></td><td></td><td class="sel"></td><td></td><td></td></tr>
                <tr><td>14</td><td></td><td></td><td></td><td class="sel"></td><td></td><td></td></tr>
                <tr class="s"><td>15</td><td></td><td></td><td></td><td class="sel"></td><td></td><td></td></tr>
                <tr><td>16</td><td></td><td></td><td></td><td class="sel"></td><td></td><td></td></tr>
                <tr class="s"><td>17</td><td></td><td></td><td></td><td class="sel"></td><td></td><td></td></tr>
                <tr><td>18</td><td></td><td></td><td></td><td class="sel"></td><td></td><td></td></tr>
                <tr class="s"><td>19</td><td></td><td></td><td></td><td class="sel"></td><td></td><td></td></tr>
                <tr><td>20</td><td></td><td></td><td></td><td class="sel"></td><td></td><td></td></tr>
                <tr class="s"><td>21</td><td></td><td></td><td></td><td class="sel"></td><td></td><td></td></tr>
                <tr><td>22</td><td></td><td></td><td></td><td class="sel"></td><td></td><td></td></tr>
                <tr class="s"><td>23</td><td></td><td></td><td></td><td class="sel"></td><td></td><td></td></tr>
                <tr><td>24</td><td></td><td></td><td></td><td class="sel"></td><td></td><td></td></tr>
                <tr class="s"><td>25</td><td></td><td></td><td></td><td class="sel"></td><td></td><td></td></tr>
              </tbody>
            </table>
          </div>
          <div class="hscroll"><span class="corner"></span><div class="track wide-track"><svg class="al"><use href="#caret"/></svg><i class="thumb th-c"></i><svg class="ar"><use href="#caret"/></svg></div></div>
          <div class="vscroll"><svg class="au"><use href="#caret"/></svg><i class="thumb v2"></i><svg class="ad"><use href="#caret"/></svg></div>
        </div>
        <aside class="rail"><svg><use href="#r-comment"/></svg><svg><use href="#r-link"/></svg><svg><use href="#r-cards"/></svg><svg><use href="#r-brand"/></svg><svg><use href="#r-update"/></svg><svg><use href="#r-file"/></svg><svg><use href="#r-activity"/></svg><svg><use href="#r-summary"/></svg><svg><use href="#r-people"/></svg><svg><use href="#r-chart"/></svg><svg><use href="#r-plug"/></svg><svg><use href="#r-ai"/></svg></aside>
        <form class="dialog">
          <label for="col-name">Name</label>
          <div class="field"><input id="col-name" type="text" value="Conduit H Mint. Areas, Laptops,Accessorie" spellcheck="false"><i class="cursor"></i><svg class="squiggle" aria-hidden="true"><defs><pattern id="wave" width="6" height="4" patternUnits="userSpaceOnUse"><path d="M-1 4 0 3l3-2.500L6 3l1 1" fill="none" stroke="#f0352c" stroke-width="1.200"/></pattern></defs><rect width="132" height="4" fill="url(#wave)"/></svg></div>
          <label for="col-type">Column Type</label>
          <div class="field"><select id="col-type"><option>Text/Number</option></select><span class="a1">A1</span><svg class="drop"><use href="#caret"/></svg></div>
          <div class="actions"><button type="button" class="cancel">Cancel</button><button type="button" class="ok">Ok</button></div>
        </form>
      </div>
      <div class="outer-scroll"><svg class="al"><use href="#caret"/></svg><i></i><svg class="ar"><use href="#caret"/></svg></div>
    </main>
  </div>
</section>
</div>

<footer class="taskbar">
  <div class="forecast"><span class="wx"><svg><use href="#weather"/></svg><em>1</em></span><p>38°F<br><span>Mostly sunny</span></p></div>
  <div class="dock">
    <button class="app-btn" aria-label="Start"><svg><use href="#start"/></svg></button>
    <label class="tb-search"><svg class="i16"><use href="#search-o"/></svg><input type="text" placeholder="Search" aria-label="Search"><svg class="flag"><use href="#flag"/></svg></label>
    <button class="app-btn" aria-label="Task view"><svg><use href="#taskview"/></svg></button>
    <button class="app-btn run" aria-label="Teams"><svg><use href="#teams"/></svg><em>1</em></button>
    <button class="app-btn run current" aria-label="Edge"><svg><use href="#edge"/></svg></button>
    <button class="app-btn run" aria-label="Outlook"><svg><use href="#outlook"/></svg></button>
    <button class="app-btn" aria-label="File Explorer"><svg><use href="#explorer"/></svg></button>
    <button class="app-btn" aria-label="Discord"><svg><use href="#discord"/></svg></button>
    <button class="app-btn run" aria-label="G"><svg><use href="#gapp"/></svg></button>
    <button class="app-btn" aria-label="Forms"><svg><use href="#forms"/></svg></button>
  </div>
  <div class="tray"><p>7:37 AM<br>2/16/2026</p><svg class="i16"><use href="#dnd"/></svg></div>
</footer>
</div>
</body>
</html>
```
FILE: styles.css
```css
* { box-sizing: border-box; }
body { margin: 0; background: #1c1c1c; font-family: "Open Sans", "Noto Sans", sans-serif; font-size: 12px; }
a { color: inherit; text-decoration: none; }
button { border: 0; padding: 0; background: none; color: inherit; font: inherit; display: flex; align-items: center; justify-content: center; flex: none; }
svg { display: block; flex: none; overflow: visible; }
em { font-style: normal; }
p { margin: 0; }
.sprite { position: absolute; width: 0; height: 0; }
.i16 { width: 16px; height: 16px; }
.i18 { width: 18px; height: 18px; }

.desktop { height: 100vh; display: flex; flex-direction: column; overflow: hidden; }
.windows { flex: 1; min-height: 0; display: flex; }
.window { flex: 1; min-width: 0; display: flex; flex-direction: column; background: #3b3b3b; border: 1px solid #6a6a6a; color: #fff; padding-bottom: 4px; }
.window.active { position: relative; z-index: 2; box-shadow: 0 0 28px rgba(0, 0, 0, .65); }

/* Browser chrome */
.tabstrip, .bookmarks { font-family: Roboto, "Noto Sans", sans-serif; }
.tabstrip { height: 39px; display: flex; align-items: flex-end; background: #202020; padding-left: 4px; }
.inactive .tabstrip { background: #2e2e2e; }
.tablist { width: 32px; height: 32px; margin: 0 4px 4px 0; border-radius: 8px; background: #2d2d2d; color: #ddd; }
.inactive .tablist { background: #363636; }
.tablist svg { width: 14px; height: 14px; }
.tab { width: 240px; height: 36px; display: flex; align-items: center; gap: 7px; padding: 0 7px 2px 9px; border-radius: 8px 8px 0 0; background: #3b3b3b; }
.tab-title { flex: 1; margin-right: -6px; overflow: hidden; white-space: nowrap; -webkit-mask-image: linear-gradient(90deg, #000 90%, transparent); mask-image: linear-gradient(90deg, #000 90%, transparent); }
.inactive .tab-title { color: #ccc; }
.tab-x { width: 18px; height: 18px; }
.tab-x svg { width: 12px; height: 12px; }
.newtab { width: 40px; height: 38px; color: #aaa; }
.wincontrols { margin-left: auto; display: flex; height: 38px; }
.wincontrols button { width: 46px; }
.wincontrols svg { width: 12px; height: 12px; }
.inactive .wincontrols { color: #8d8d8d; }
.navbar { height: 40px; display: flex; align-items: center; padding: 0 4px 0 3px; }
.nb { width: 34px; height: 34px; color: #ddd; margin-right: 2px; }
.address { flex: 1; min-width: 0; height: 32px; display: flex; align-items: center; gap: 12px; padding: 0 6px 0 9px; border: 1px solid #646464; border-radius: 16px; background: #333; }
.url { flex: 1; margin-left: -5px; font-size: 13px; line-height: 20px; color: #d0d0d0; white-space: nowrap; overflow: hidden; }
.url b { font-weight: 400; color: #fff; }
.dim { color: #999; }
.navtools { display: flex; align-items: center; gap: 11px; width: 190px; padding-left: 12px; }
.navtools .i16 { margin-right: 9px; }
.vbar { width: 1px; height: 16px; background: #666; }
.avatar { width: 24px; height: 24px; margin: 0 4px; border-radius: 50%; background: #fff; color: #111; font: 20px/24px "Noto Sans CJK SC", sans-serif; text-align: center; overflow: hidden; }
.dots { width: 18px; height: 6px; }
.chat { width: 70px; height: 32px; gap: 7px; border-radius: 16px; background: #1c1c1c; }
.chat svg { width: 22px; height: 22px; }
.bookmarks { height: 34px; display: flex; align-items: center; padding: 0 29px 2px 12px; }
.bookmarks a { display: flex; align-items: center; gap: 6px; white-space: nowrap; }
.bookmarks .ws { width: 18px; height: 14px; }
.bookmarks .vbar { margin: 0 12px; }
.b1 { width: 77px; }
.b2 { width: 90px; }
.b3 { width: 154px; }
.b4 { width: 125px; }
.more-bm { width: 10px; height: 14px; margin-left: auto; }

.page { flex: 1; min-height: 0; margin: 0 4px; display: flex; border-radius: 8px; overflow: hidden; background: #fff; }

/* Sidebar */
.side { width: 100px; flex: none; display: flex; flex-direction: column; align-items: center; padding-top: 24px; background: linear-gradient(#2d47bf, #4a42c8 50%, #653dd3); color: #cdd0f2; font: 700 14px/18px Lato, sans-serif; text-align: center; }
.side a { position: relative; display: flex; flex-direction: column; align-items: center; width: 96px; padding-bottom: 18px; }
.side svg { width: 18px; height: 18px; margin-bottom: 7px; }
.side a:nth-child(even) { padding-bottom: 19px; }
.badge { position: absolute; left: 40px; top: -5px; width: 22px; height: 17px; border-radius: 9px; background: #b9432f; color: #fff; font: 700 11px/17px Inter, sans-serif; }
.side .create { padding: 2px 0 23px; }
.side .round { width: 30px; height: 30px; border-radius: 50%; background: #8a80da; color: #fff; display: grid; place-items: center; margin-bottom: 4px; }
.side .round svg, .side .box svg { margin: 0; }
.side hr { width: 60px; height: 2px; border: 0; margin: 0 0 20px; background: #968bdd; }
.side .box { width: 36px; height: 36px; border: 2px solid #a69de3; border-radius: 8px; background: #857bda; display: grid; place-items: center; margin-bottom: 1px; }
.side-foot { margin-top: auto; display: flex; flex-direction: column; gap: 26px; padding-bottom: 22px; }
.side-foot svg { margin: 0; }

/* Sheet header */
.app { flex: 1; min-width: 0; display: flex; flex-direction: column; color: #444; font-family: Inter, sans-serif; }
.menu { height: 62px; display: flex; align-items: center; padding-right: 9px; font-size: 15px; }
.m0 { width: 41px; }
.m1 { width: 112px; }
.m2 { width: 64px; }
.m3 { width: 111px; }
.menu a { white-space: nowrap; flex: none; }
.note { width: 20px; height: 24px; margin-left: 6px; }
.fav { width: 22px; height: 22px; margin-left: 11px; }
.share { margin-left: auto; width: 108px; height: 44px; gap: 17px; border-radius: 4px; background: #117d81; color: #fff; font-size: 15px; font-weight: 700; padding-right: 3px; }
.share svg { width: 8px; height: 8px; }
.tools { height: 46px; display: flex; align-items: center; padding: 0 12px 2px 15px; border-bottom: 1px solid #ccc; font-size: 14px; font-weight: 600; }
.tools svg { width: 20px; height: 20px; }
.tools .caret { width: 7px; height: 7px; margin-left: 15px; }
.t { width: 20px; margin-right: 20px; }
.tools .more { width: 20px; height: 6px; }
.off { color: #c4c4c4; }
.sep { width: 2px; height: 28px; background: #dcdcdc; margin-right: 21px; }
.view, .filt, .font, .size { justify-content: flex-start; }
.view svg:first-child, .filt svg:first-child { margin-right: 10px; }
.view { width: 102px; }
.filt { width: 131px; }
.filt.plain { width: 83px; }
.filt.plain svg:first-child { margin-right: 3px; }
.font { width: 84px; padding-left: 8px; }
.size { width: 68px; padding-left: 7px; }
.expand { margin-left: auto; }
.expand svg { width: 18px; height: 18px; }

/* Grid */
.work { position: relative; flex: 1; min-height: 0; display: flex; }
.sheet { position: relative; flex: 1; min-width: 0; display: flex; flex-direction: column; border-right: 1px solid #ddd; }
.rows { flex: 1; min-height: 0; overflow: hidden; }
table { width: 100%; table-layout: fixed; border-collapse: separate; border-spacing: 0; }
.c-num { width: 58px; }
.c-gap { width: 139px; }
.c-sub { width: 109px; }
.c-cut { width: 51px; }
.c-col { width: 165px; }
th { height: 89px; padding: 13px 0 0; vertical-align: top; background: #f8f7f6; border-bottom: 2px solid #4a62a4; font-size: 14px; font-weight: 600; line-height: 17px; text-align: left; overflow: hidden; }
th div { position: relative; height: 74px; padding: 2px 10px 0; border-left: 1px solid transparent; }
th .ln { border-left-color: #ddd; }
th .cut { padding: 2px 0 0; margin-left: -3px; border: 0; }
th .sub { padding-left: 9px; white-space: nowrap; }
.fx { position: absolute; left: 13px; bottom: 2px; font: italic 700 14px/20px "Liberation Serif", serif; color: #555; }
.fx small { font-size: 11px; }
.pad { position: absolute; left: 11px; bottom: 6px; width: 12px; height: 14px; }
th.picked { padding-top: 9px; border-bottom-color: #6093d3; }
th.picked div { height: 78px; padding-top: 6px; background: #6093d3; border-radius: 2px 2px 0 0; color: #fff; }
td { height: 28px; padding: 0 0 0 7px; vertical-align: top; border-bottom: 1px solid #e6e6e6; font: 15px/25px "Liberation Sans", Arial, sans-serif; color: #000; white-space: nowrap; overflow: hidden; }
.s td { height: 27px; }
.tall td { height: 45px; }
.first td { height: 27px; }
.top td { height: 29px; }
td:first-child { padding: 3px 27px 0 0; text-align: right; color: #8f8f8f; font: 13px/22px Inter, sans-serif; }
.tracker td:first-child { padding-top: 6px; line-height: 20px; }
.tracker td:nth-child(3), .report td:nth-child(3), .report td:nth-child(4), .report td:nth-child(7) { border-left: 1px solid #e0e0e0; }
.tracker .copied { position: relative; overflow: visible; }
.copied::after { content: ""; position: absolute; inset: -1px 0 -1px -1px; border: 2px dashed #6a9ad8; border-right: 0; }
td.sel { background: #ccdbf0; border-left: 2px solid #6093d3; border-right: 2px solid #6093d3; border-bottom-color: #d3dae4; }
.freeze { position: absolute; right: 109px; top: 9px; bottom: 0; width: 2px; background: #b8b8b8; box-shadow: 2px 0 3px rgba(0, 0, 0, .12); }
.hscroll { height: 16px; display: flex; background: #fff; color: #9e9e9e; position: relative; }
.corner { width: 58px; height: 19px; margin-top: -3px; background: #f8f7f6; }
.hscroll svg, .outer-scroll svg, .vscroll svg { width: 8px; height: 8px; }
.al { transform: rotate(90deg); }
.ar { transform: rotate(-90deg); margin-left: auto; }
.au { transform: rotate(180deg); }
.thumb { background: #9e9e9e; border-radius: 5px; }
.track { flex: 1; display: flex; align-items: center; padding: 0 5px; }
.sub-track { flex: none; width: 109px; padding-right: 20px; }
.wide-track { padding-right: 20px; }
.th-a { width: 100px; height: 9px; margin-left: 157px; }
.th-b { width: 17px; height: 9px; margin-left: 5px; }
.th-c { width: 24px; height: 9px; margin-left: 52px; }
.vscroll { position: absolute; right: 0; top: 89px; bottom: 16px; width: 16px; background: #fff; color: #9e9e9e; display: flex; flex-direction: column; align-items: center; padding: 5px 0 4px; }
.vscroll .thumb { width: 9px; }
.v1 { height: 141px; margin-top: 162px; }
.v2 { height: 190px; margin-top: 139px; }
.vscroll .ad { margin-top: auto; }
.rail { width: 57px; flex: none; display: flex; flex-direction: column; align-items: center; gap: 29px; padding-top: 15px; background: #fff; color: #444; }
.window.inactive .rail { background: transparent; }
.rail svg { width: 24px; height: 24px; }
.outer-scroll { height: 15px; display: flex; align-items: center; padding: 0 5px; background: #082c54; color: #0d2138; }
.outer-scroll i { flex: 1; height: 9px; margin: 0 6px 0 42px; border-radius: 5px; background: #0d2138; }

/* Column dialog */
.dialog { position: absolute; top: 89px; right: 28px; width: 385px; padding: 12px 11px 12px; border-radius: 0 0 8px 8px; background: #fff; box-shadow: 0 4px 12px rgba(0, 0, 0, .25); clip-path: inset(0 -20px -20px -20px); font-size: 14px; color: #555; }
.dialog label { display: block; line-height: 18px; margin-bottom: 5px; }
.field { position: relative; margin-bottom: 19px; }
.field input, .field select { width: 100%; height: 44px; border: 2px solid #6391cf; border-radius: 4px; padding: 0 11px; background: #fff; font: 14px Inter, sans-serif; color: #222; outline: 0; appearance: none; display: block; }
.field select { border-color: #ddd; padding-left: 38px; color: #555; }
.cursor { position: absolute; left: 13px; top: 13px; width: 1px; height: 17px; background: #000; }
.squiggle { position: absolute; left: 166px; top: 28px; width: 132px; height: 4px; }
.a1 { position: absolute; left: 16px; top: 13px; font-size: 11px; line-height: 16px; font-weight: 600; color: #444; }
.drop { position: absolute; right: 24px; top: 18px; width: 8px; height: 8px; color: #000; }
.actions { display: flex; justify-content: flex-end; gap: 13px; margin-top: 35px; }
.actions button { width: 106px; height: 44px; border-radius: 4px; font-size: 15px; font-weight: 600; }
.cancel { background: #ededed; color: #444; }
.ok { background: #6693cf; color: #fff; }

/* Taskbar */
.taskbar { height: 48px; display: grid; grid-template-columns: 1fr auto 1fr; align-items: center; background: #1c1c1c; color: #fff; padding: 0 19px 0 21px; }
.taskbar p { line-height: 16px; }
.forecast { display: flex; align-items: center; gap: 3px; }
.forecast p span { color: #c6c6c6; }
.wx { position: relative; }
.wx svg { width: 26px; height: 28px; }
.wx em { position: absolute; left: 9px; top: -1px; width: 16px; height: 16px; border-radius: 50%; background: #ff8f99; color: #222; line-height: 16px; text-align: center; }
.dock { display: flex; align-items: center; }
.app-btn { position: relative; width: 44px; height: 44px; }
.app-btn svg { width: 24px; height: 24px; }
.app-btn em { position: absolute; right: 4px; top: 4px; width: 16px; height: 16px; border-radius: 50%; background: #c52f22; line-height: 16px; }
.run::after { content: ""; position: absolute; bottom: 3px; left: 19px; width: 6px; height: 3px; border-radius: 2px; background: #9a9a9a; }
.current::before { content: ""; position: absolute; inset: 2px 4px; border-radius: 4px; background: #2d2d2d; border: 1px solid #363636; box-shadow: 4px 0 0 -1px #2d2d2d; }
.current svg { position: relative; }
.current::after { left: 14px; width: 16px; background: #4cc2ff; }
.tb-search { width: 220px; height: 32px; margin: 0 2px; display: flex; align-items: center; padding: 0 14px 0 11px; border: 1px solid #4c4c4c; border-radius: 16px; background: #3a3a3a; color: #ddd; }
.tb-search input { flex: 1; min-width: 0; border: 0; background: none; padding: 0 0 0 9px; font: 13px "Open Sans", sans-serif; outline: 0; }
.tb-search input::placeholder { color: #ccc; }
.flag { width: 28px; height: 24px; }
.tray { display: flex; align-items: center; justify-content: flex-end; gap: 8px; text-align: right; }
```
